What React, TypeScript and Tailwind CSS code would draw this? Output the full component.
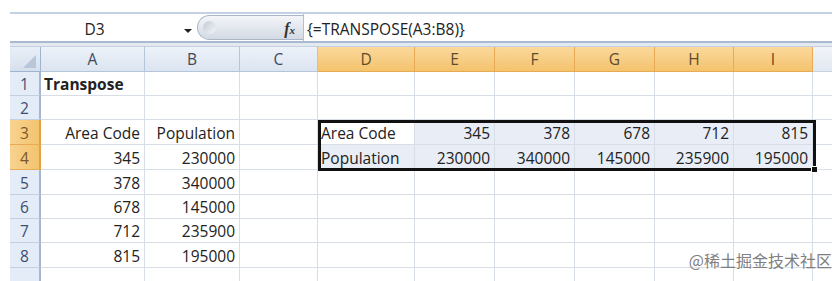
import React from "react";

const colW = [
  "w-[31px]",
  "w-[104px]",
  "w-[95px]",
  "w-[78px]",
  "w-[97px]",
  "w-[80px]",
  "w-[80px]",
  "w-[80px]",
  "w-[79px]",
  "w-[79px]",
  "w-[19px]",
];

const letters = ["A", "B", "C", "D", "E", "F", "G", "H", "I"];

const rowH = [
  "h-[24px]",
  "h-[24px]",
  "h-[25px]",
  "h-[25px]",
  "h-[25px]",
  "h-[24px]",
  "h-[24px]",
  "h-[25px]",
  "h-[24px]",
];

type Cell = { text?: string; align?: "l" | "r"; bold?: boolean; tint?: boolean };

// rows 1..9, columns A..I
const data: Cell[][] = [
  [{ text: "Transpose", align: "l", bold: true }],
  [],
  [
    { text: "Area Code", align: "r" },
    { text: "Population", align: "r" },
    {},
    { text: "Area Code", align: "l" },
    { text: "345", align: "r", tint: true },
    { text: "378", align: "r", tint: true },
    { text: "678", align: "r", tint: true },
    { text: "712", align: "r", tint: true },
    { text: "815", align: "r", tint: true },
  ],
  [
    { text: "345", align: "r" },
    { text: "230000", align: "r" },
    {},
    { text: "Population", align: "l", tint: true },
    { text: "230000", align: "r", tint: true },
    { text: "340000", align: "r", tint: true },
    { text: "145000", align: "r", tint: true },
    { text: "235900", align: "r", tint: true },
    { text: "195000", align: "r", tint: true },
  ],
  [{ text: "378", align: "r" }, { text: "340000", align: "r" }],
  [{ text: "678", align: "r" }, { text: "145000", align: "r" }],
  [{ text: "712", align: "r" }, { text: "235900", align: "r" }],
  [{ text: "815", align: "r" }, { text: "195000", align: "r" }],
  [],
];

const FormulaBar = () => (
  <div className="flex h-[29px] border-t-2 border-[#c3d1e4] bg-white">
    {/* name box */}
    <div className="relative flex w-[187px] items-center justify-center pt-[4px] text-[15.5px] text-[#222]">
      <span className="ml-[-18px]">D3</span>
      <span className="absolute right-[5px] top-[15px] h-0 w-0 border-x-[4px] border-t-[4px] border-x-transparent border-t-[#222]" />
    </div>
    {/* pill with fx */}
    <div className="relative my-[1px] flex w-[106px] items-center justify-end rounded-l-full border border-r-0 border-[#a9b6c7] bg-gradient-to-b from-[#f3f5f8] to-[#d3dae4] pr-[8px] pt-[2px]">
      <span className="absolute left-[5px] top-[5px] h-[13px] w-[13px] rounded-full bg-gradient-to-br from-[#c3cad4] to-[#f4f6f9]" />
      <span className="font-['Liberation_Serif'] text-[16px] font-bold italic text-[#333]">
        f<span className="text-[11px]">x</span>
      </span>
    </div>
    <div className="flex flex-1 items-center border-l border-[#b4c0cf] pl-[3px] pt-[4px] text-[15.5px] text-[#222]">
      {"{=TRANSPOSE(A3:B8)}"}
    </div>
  </div>
);

const HeaderRow = () => (
  <div className="flex h-[25px]">
    <div
      className={`${colW[0]} relative border-r border-b border-[#9fb4cd] bg-gradient-to-b from-[#e9eff7] to-[#d6e0ed]`}
    >
      <span className="absolute bottom-[3px] right-[4px] h-0 w-0 [border-bottom:13px_solid_#b7c6d9] [border-left:13px_solid_transparent]" />
    </div>
    {letters.map((l, i) => {
      const sel = i >= 3;
      return (
        <div
          key={l}
          className={`${colW[i + 1]} flex items-center justify-center border-r border-b pt-[2px] text-[15.5px] ${
            sel
              ? "border-[#e7ab55] bg-gradient-to-b from-[#fbd89b] to-[#f4c36c] text-[#5e4a2c]"
              : "border-[#b6c6da] bg-gradient-to-b from-[#edf2f9] to-[#dbe4f0] text-[#3e4a5c]"
          }`}
        >
          {l}
        </div>
      );
    })}
    <div className={`${colW[10]} border-b border-[#c8d3e1] bg-gradient-to-b from-[#f1f4f9] to-[#e2e8f1]`} />
  </div>
);

export default function App() {
  return (
    <div className="relative h-[281px] w-[840px] overflow-hidden bg-white font-['Open_Sans'] text-[#222]">
      <div className="ml-[10px] mt-[12px] w-[822px]">
        <FormulaBar />
        {/* separator strip */}
        <div className="h-[6px] border-t-2 border-b border-t-[#a9b9cf] border-b-[#c4d0df] bg-[#e3e9f1]" />
        <HeaderRow />
        {data.map((row, r) => {
          const sel = r === 2 || r === 3;
          return (
            <div key={r} className={`flex ${rowH[r]}`}>
              <div
                className={`${colW[0]} flex items-center justify-center border-b pt-[3px] text-[15.5px] ${
                  sel
                    ? "border-r-2 border-r-[#e3a24a] border-b-[#e7ab55] bg-gradient-to-r from-[#f8d28f] to-[#f3c46e] text-[#7a5a2a]"
                    : "border-r-2 border-r-[#a3b8d0] border-b-[#c2d0e1] bg-[#e4ecf7] text-[#3b4f73]"
                }`}
              >
                {r < 8 ? r + 1 : ""}
              </div>
              {letters.map((_, c) => {
                const cell = row[c] || {};
                return (
                  <div
                    key={c}
                    className={`${colW[c + 1]} flex items-center whitespace-nowrap border-r border-b border-[#d8dee8] pt-[3px] text-[15.5px] ${
                      cell.align === "r" ? "justify-end pr-[4px]" : "justify-start pl-[3px]"
                    } ${cell.bold ? "font-bold" : ""} ${cell.tint ? "bg-[#e8edf6]" : ""}`}
                  >
                    {cell.text}
                  </div>
                );
              })}
              <div className={`${colW[10]} border-b border-[#d8dee8]`} />
            </div>
          );
        })}
      </div>

      {/* selection outline D3:I4 */}
      <div className="absolute left-[318px] top-[120px] h-[51px] w-[498px] border-[3px] border-[#111]">
        <span className="absolute -bottom-[5px] -right-[5px] h-[7px] w-[7px] border border-white bg-[#111]" />
      </div>

      <div className="absolute bottom-[9px] right-[8px] font-['Noto_Sans_CJK_SC'] text-[16px] text-[#808080]">
        @稀土掘金技术社区
      </div>
    </div>
  );
}
